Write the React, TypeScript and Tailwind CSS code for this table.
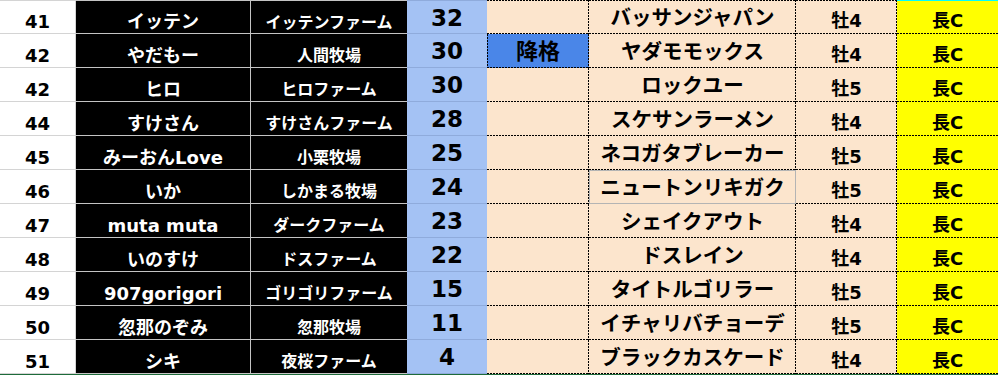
const FONT = { fontFamily: '"DejaVu Sans", "Noto Sans CJK JP", sans-serif' }

const ROWS = [
  { no: 41, owner: 'イッテン', farm: 'イッテンファーム', pt: 32, mark: '', horse: 'バッサンジャパン', sex: '牡4', dist: '長C' },
  { no: 42, owner: 'やだもー', farm: '人間牧場', pt: 30, mark: '降格', horse: 'ヤダモモックス', sex: '牡4', dist: '長C' },
  { no: 42, owner: 'ヒロ', farm: 'ヒロファーム', pt: 30, mark: '', horse: 'ロックユー', sex: '牡5', dist: '長C' },
  { no: 44, owner: 'すけさん', farm: 'すけさんファーム', pt: 28, mark: '', horse: 'スケサンラーメン', sex: '牡4', dist: '長C' },
  { no: 45, owner: 'みーおんLove', farm: '小栗牧場', pt: 25, mark: '', horse: 'ネコガタブレーカー', sex: '牡5', dist: '長C' },
  { no: 46, owner: 'いか', farm: 'しかまる牧場', pt: 24, mark: '', horse: 'ニュートンリキガク', sex: '牡5', dist: '長C', boxed: true },
  { no: 47, owner: 'muta muta', farm: 'ダークファーム', pt: 23, mark: '', horse: 'シェイクアウト', sex: '牡4', dist: '長C' },
  { no: 48, owner: 'いのすけ', farm: 'ドスファーム', pt: 22, mark: '', horse: 'ドスレイン', sex: '牡4', dist: '長C' },
  { no: 49, owner: '907gorigori', farm: 'ゴリゴリファーム', pt: 15, mark: '', horse: 'タイトルゴリラー', sex: '牡5', dist: '長C' },
  { no: 50, owner: '忽那のぞみ', farm: '忽那牧場', pt: 11, mark: '', horse: 'イチャリバチョーデ', sex: '牡5', dist: '長C' },
  { no: 51, owner: 'シキ', farm: '夜桜ファーム', pt: 4, mark: '', horse: 'ブラックカスケード', sex: '牡4', dist: '長C' },
]

const cell = 'h-[34px] flex items-center justify-center whitespace-nowrap font-bold leading-none'

// excel-ish dotted grid lines (2px on / 1px off)
const peach = '[background:linear-gradient(to_right,#000_2px,transparent_0)_0_100%/3px_1px_repeat-x,linear-gradient(#000_2px,transparent_0)_100%_0/1px_3px_repeat-y,#fce5cd]'
const peachTop = '[background:linear-gradient(to_right,#000_2px,transparent_0)_0_0/3px_1px_repeat-x,linear-gradient(to_right,#000_2px,transparent_0)_0_100%/3px_1px_repeat-x,linear-gradient(#000_2px,transparent_0)_100%_0/1px_3px_repeat-y,#fce5cd]'
const blueMark = '[background:linear-gradient(to_right,#000_2px,transparent_0)_0_100%/3px_1px_repeat-x,linear-gradient(#000_2px,transparent_0)_100%_0/1px_3px_repeat-y,linear-gradient(#000_2px,transparent_0)_0_0/1px_3px_repeat-y,#4a86e8]'
const yellow = '[background:linear-gradient(to_right,#000_2px,transparent_0)_0_100%/3px_1px_repeat-x,#ffff00]'

export default function App() {
  return (
    <div className="w-[998px] h-[376px] bg-white overflow-hidden" style={FONT}>
      <div className="grid grid-cols-[76px_175px_156px_80px_102px_207px_101px_101px]">
        {ROWS.map((r, i) => {
          const first = i === 0
          return (
            <div key={i} className="contents">
              <div className={`${cell} pt-[10px] text-[18px] text-black bg-white border-r border-b border-[#d4d4d4] ${first ? 'border-t' : ''}`}>
                {r.no}
              </div>
              <div className={`${cell} pt-[10px] text-[18px] text-white bg-black border-r border-b border-[#c4c4c4] ${first ? 'border-t' : ''}`}>
                {r.owner}
              </div>
              <div className={`${cell} pt-[11px] text-[16px] text-white bg-black border-b border-[#c4c4c4] ${first ? 'border-t' : ''}`}>
                {r.farm}
              </div>
              <div className={`${cell} pt-[2px] text-[23px] text-black bg-[#a4c2f4] border-b border-[#8fabdc] ${first ? 'border-t' : ''}`}>
                {r.pt}
              </div>
              {r.mark ? (
                <div className={`${cell} pt-[1px] text-[22px] text-black ${blueMark}`}>{r.mark}</div>
              ) : (
                <div className={`${cell} ${first ? peachTop : peach}`} />
              )}
              {r.boxed ? (
                <div className={`${cell} pt-[3px] text-[20.5px] text-black bg-[#fce5cd] shadow-[inset_0_0_0_1px_#b4b4b4]`}>
                  {r.horse}
                </div>
              ) : (
                <div className={`${cell} pt-[3px] text-[20.5px] text-black ${first ? peachTop : peach}`}>
                  {r.horse}
                </div>
              )}
              <div className={`${cell} pt-[8px] text-[18px] text-black ${first ? peachTop : peach}`}>
                {r.sex}
              </div>
              <div className={`${cell} pt-[7px] text-[18px] text-black ${yellow} ${first ? 'border-t border-[#00ffff]' : ''}`}>
                {r.dist}
              </div>
            </div>
          )
        })}
      </div>
      <div className="h-px bg-[#1e6b3a]" />
    </div>
  )
}
